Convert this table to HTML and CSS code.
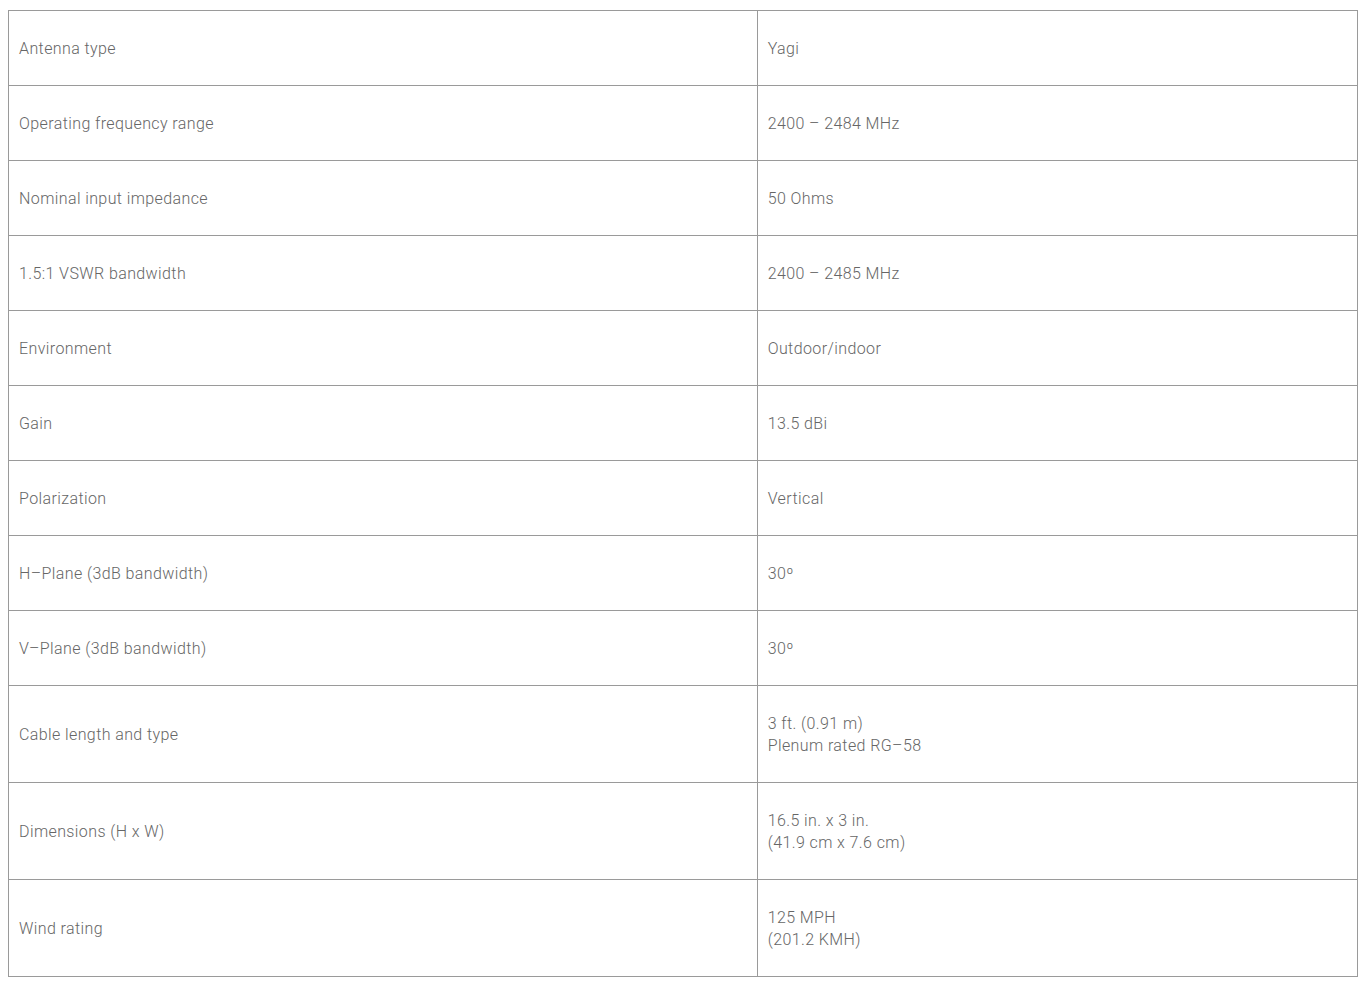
FILE: index.html
```html
<!DOCTYPE html>
<html>
<head>
<meta charset="utf-8">
<link rel="stylesheet" href="styles.css">
</head>
<body>
<table class="spec">
<tbody>
<tr><td class="k">Antenna type</td><td>Yagi</td></tr>
<tr><td class="k">Operating frequency range</td><td>2400 – 2484 MHz</td></tr>
<tr><td class="k">Nominal input impedance</td><td>50 Ohms</td></tr>
<tr><td class="k">1.5:1 VSWR bandwidth</td><td>2400 – 2485 MHz</td></tr>
<tr><td class="k">Environment</td><td>Outdoor/indoor</td></tr>
<tr><td class="k">Gain</td><td>13.5 dBi</td></tr>
<tr><td class="k">Polarization</td><td>Vertical</td></tr>
<tr><td class="k">H–Plane (3dB bandwidth)</td><td>30º</td></tr>
<tr><td class="k">V–Plane (3dB bandwidth)</td><td>30º</td></tr>
<tr><td class="k">Cable length and type</td><td>3 ft. (0.91 m)<br>Plenum rated RG–58</td></tr>
<tr><td class="k">Dimensions (H x W)</td><td>16.5 in. x 3 in.<br>(41.9 cm x 7.6 cm)</td></tr>
<tr><td class="k">Wind rating</td><td>125 MPH<br>(201.2 KMH)</td></tr>
</tbody>
</table>
</body>
</html>
```
FILE: styles.css
```css
html, body {
  margin: 0;
  padding: 0;
  background: #fff;
}
body {
  padding: 10px 9px 8px 8px;
  font-family: Roboto, "Liberation Sans", sans-serif;
  font-weight: 300;
  font-size: 16px;
  letter-spacing: 0.4px;
  color: #666;
}
.spec {
  width: 100%;
  border-collapse: collapse;
}
.spec td {
  border: 1px solid #9a9a9a;
  padding: 27px 10px 25px 10px;
  line-height: 22px;
  vertical-align: middle;
  text-align: left;
}
.spec td.k {
  width: 55.5%;
}
```
